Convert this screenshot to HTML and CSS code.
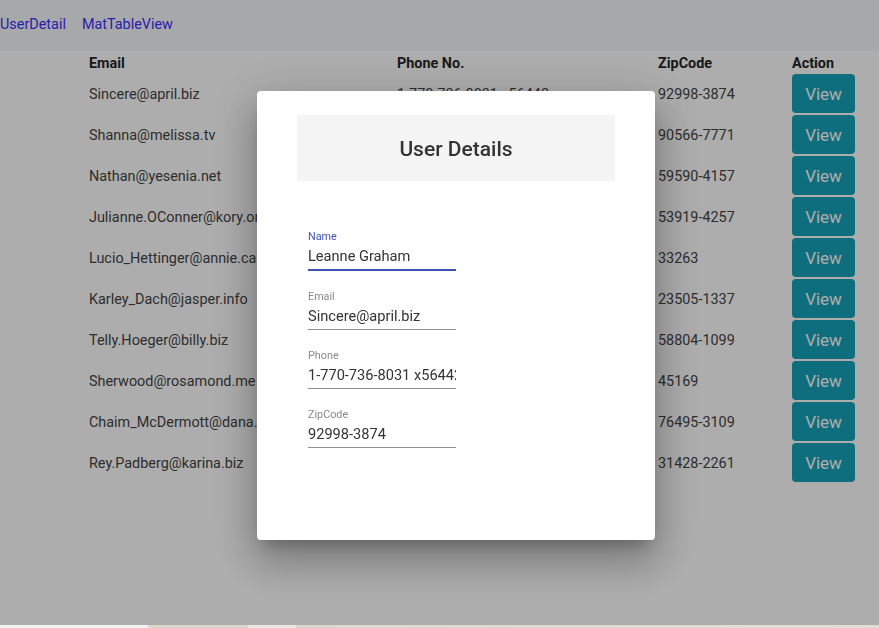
FILE: index.html
```html
<!DOCTYPE html>
<html>
<head>
<meta charset="utf-8">
<link rel="stylesheet" href="styles.css">
</head>
<body>
<div class="page">
  <nav class="nav">
    <a class="nav-link" href="#">UserDetail</a>
    <a class="nav-link" href="#">MatTableView</a>
  </nav>
  <main class="content">
    <div class="table">
      <div class="row head">
        <div class="cell">Email</div>
        <div class="cell">Phone No.</div>
        <div class="cell">ZipCode</div>
        <div class="cell">Action</div>
      </div>
      <div class="row"><div class="cell">Sincere@april.biz</div><div class="cell">1-770-736-8031 x56442</div><div class="cell">92998-3874</div><div class="cell"><button class="btn">View</button></div></div>
      <div class="row"><div class="cell">Shanna@melissa.tv</div><div class="cell">010-692-6593 x09125</div><div class="cell">90566-7771</div><div class="cell"><button class="btn">View</button></div></div>
      <div class="row"><div class="cell">Nathan@yesenia.net</div><div class="cell">1-463-123-4447</div><div class="cell">59590-4157</div><div class="cell"><button class="btn">View</button></div></div>
      <div class="row"><div class="cell">Julianne.OConner@kory.org</div><div class="cell">493-170-9623 x156</div><div class="cell">53919-4257</div><div class="cell"><button class="btn">View</button></div></div>
      <div class="row"><div class="cell">Lucio_Hettinger@annie.ca</div><div class="cell">(254)954-1289</div><div class="cell">33263</div><div class="cell"><button class="btn">View</button></div></div>
      <div class="row"><div class="cell">Karley_Dach@jasper.info</div><div class="cell">1-477-935-8478 x6430</div><div class="cell">23505-1337</div><div class="cell"><button class="btn">View</button></div></div>
      <div class="row"><div class="cell">Telly.Hoeger@billy.biz</div><div class="cell">210.067.6132</div><div class="cell">58804-1099</div><div class="cell"><button class="btn">View</button></div></div>
      <div class="row"><div class="cell">Sherwood@rosamond.me</div><div class="cell">586.493.6943 x140</div><div class="cell">45169</div><div class="cell"><button class="btn">View</button></div></div>
      <div class="row"><div class="cell">Chaim_McDermott@dana.io</div><div class="cell">(775)976-6794 x41206</div><div class="cell">76495-3109</div><div class="cell"><button class="btn">View</button></div></div>
      <div class="row"><div class="cell">Rey.Padberg@karina.biz</div><div class="cell">024-648-3804</div><div class="cell">31428-2261</div><div class="cell"><button class="btn">View</button></div></div>
    </div>
  </main>
  <div class="strip">
    <span class="s1"></span><span class="s2"></span><span class="s3"></span><span class="s4"></span>
  </div>
</div>

<div class="overlay">
  <div class="dialog">
    <div class="dialog-head">
      <h2 class="dialog-title">User Details</h2>
    </div>
    <div class="form">
      <div class="field focused">
        <div class="label">Name</div>
        <div class="value">Leanne Graham</div>
        <div class="line"></div>
      </div>
      <div class="field">
        <div class="label">Email</div>
        <div class="value">Sincere@april.biz</div>
        <div class="line"></div>
      </div>
      <div class="field">
        <div class="label">Phone</div>
        <div class="value">1-770-736-8031 x56442</div>
        <div class="line"></div>
      </div>
      <div class="field">
        <div class="label">ZipCode</div>
        <div class="value">92998-3874</div>
        <div class="line"></div>
      </div>
    </div>
  </div>
</div>
</body>
</html>
```

FILE: styles.css
```css
html, body {
  margin: 0;
  padding: 0;
  height: 100%;
}
body {
  font-family: Roboto, "Liberation Sans", Arial, sans-serif;
  font-size: 14.4px;
  color: #444;
  background: #fff;
  overflow: hidden;
}
.page {
  display: flex;
  flex-direction: column;
  height: 628px;
}
.nav {
  height: 51px;
  flex: none;
  display: flex;
  align-items: center;
  gap: 16px;
  background: #f7f8fb;
  padding-bottom: 2px;
  box-sizing: border-box;
}
.nav-link {
  color: #3b30ff;
  text-decoration: none;
  font-size: 14.4px;
}
.content {
  flex: 1;
  background: #fff;
}
.table {
  padding-left: 89px;
}
.row {
  display: grid;
  grid-template-columns: 308px 261px 134px 63px;
  height: 41px;
  align-items: center;
}
.row .cell {
  padding-top: 1px;
}
.row.head {
  height: 22px;
  font-weight: 700;
  color: #262626;
}
.row.head .cell {
  padding-top: 2px;
}
.cell {
  white-space: nowrap;
}
.btn {
  display: block;
  width: 63px;
  height: 39px;
  margin-top: -1px;
  border: none;
  border-radius: 4px;
  background: #17a2b8;
  color: #fff;
  font-family: Roboto, "Liberation Sans", Arial, sans-serif;
  font-size: 17px;
  padding: 0;
}
.strip {
  height: 3px;
  flex: none;
  display: flex;
}
.strip span { display: block; height: 3px; }
.s1 { width: 148px; background: #f2f2f2; }
.s2 { width: 100px; background: #ddd8cb; }
.s3 { width: 48px; background: #e9e9e1; }
.s4 { flex: 1; background: linear-gradient(90deg, #ddd8cb, #e2ddd2); }

.overlay {
  position: fixed;
  left: 0;
  top: 0;
  width: 100%;
  height: 625px;
  background: rgba(0, 0, 0, 0.32);
  display: flex;
  align-items: flex-start;
  justify-content: center;
}
.dialog {
  width: 398px;
  height: 449px;
  box-sizing: border-box;
  margin-left: 33px;
  margin-top: 91px;
  background: #fff;
  border-radius: 4px;
  padding: 24px 40px;
  box-shadow: 0 11px 15px -7px rgba(0,0,0,.25), 0 24px 38px 3px rgba(0,0,0,.18), 0 9px 46px 8px rgba(0,0,0,.14);
}
.dialog-head {
  height: 66px;
  background: #f4f4f4;
  display: flex;
  align-items: center;
  justify-content: center;
}
.dialog-title {
  margin: 0;
  font-size: 21px;
  font-weight: 500;
  color: #333;
  padding-top: 2px;
}
.form {
  padding: 50px 0 0 11px;
}
.field {
  width: 148px;
  margin-bottom: 20px;
}
.label {
  font-size: 10.8px;
  line-height: 12px;
  color: #8a8a8a;
}
.value {
  margin-top: 4px;
  font-size: 14.6px;
  line-height: 18px;
  color: #333;
  white-space: nowrap;
  overflow: hidden;
}
.line {
  margin-top: 4px;
  height: 1px;
  background: #8f8f8f;
  margin-bottom: 1px;
}
.field.focused .label { color: #3f51b5; }
.field.focused .line {
  height: 2px;
  background: #3f51b5;
  margin-bottom: 0;
}
```
